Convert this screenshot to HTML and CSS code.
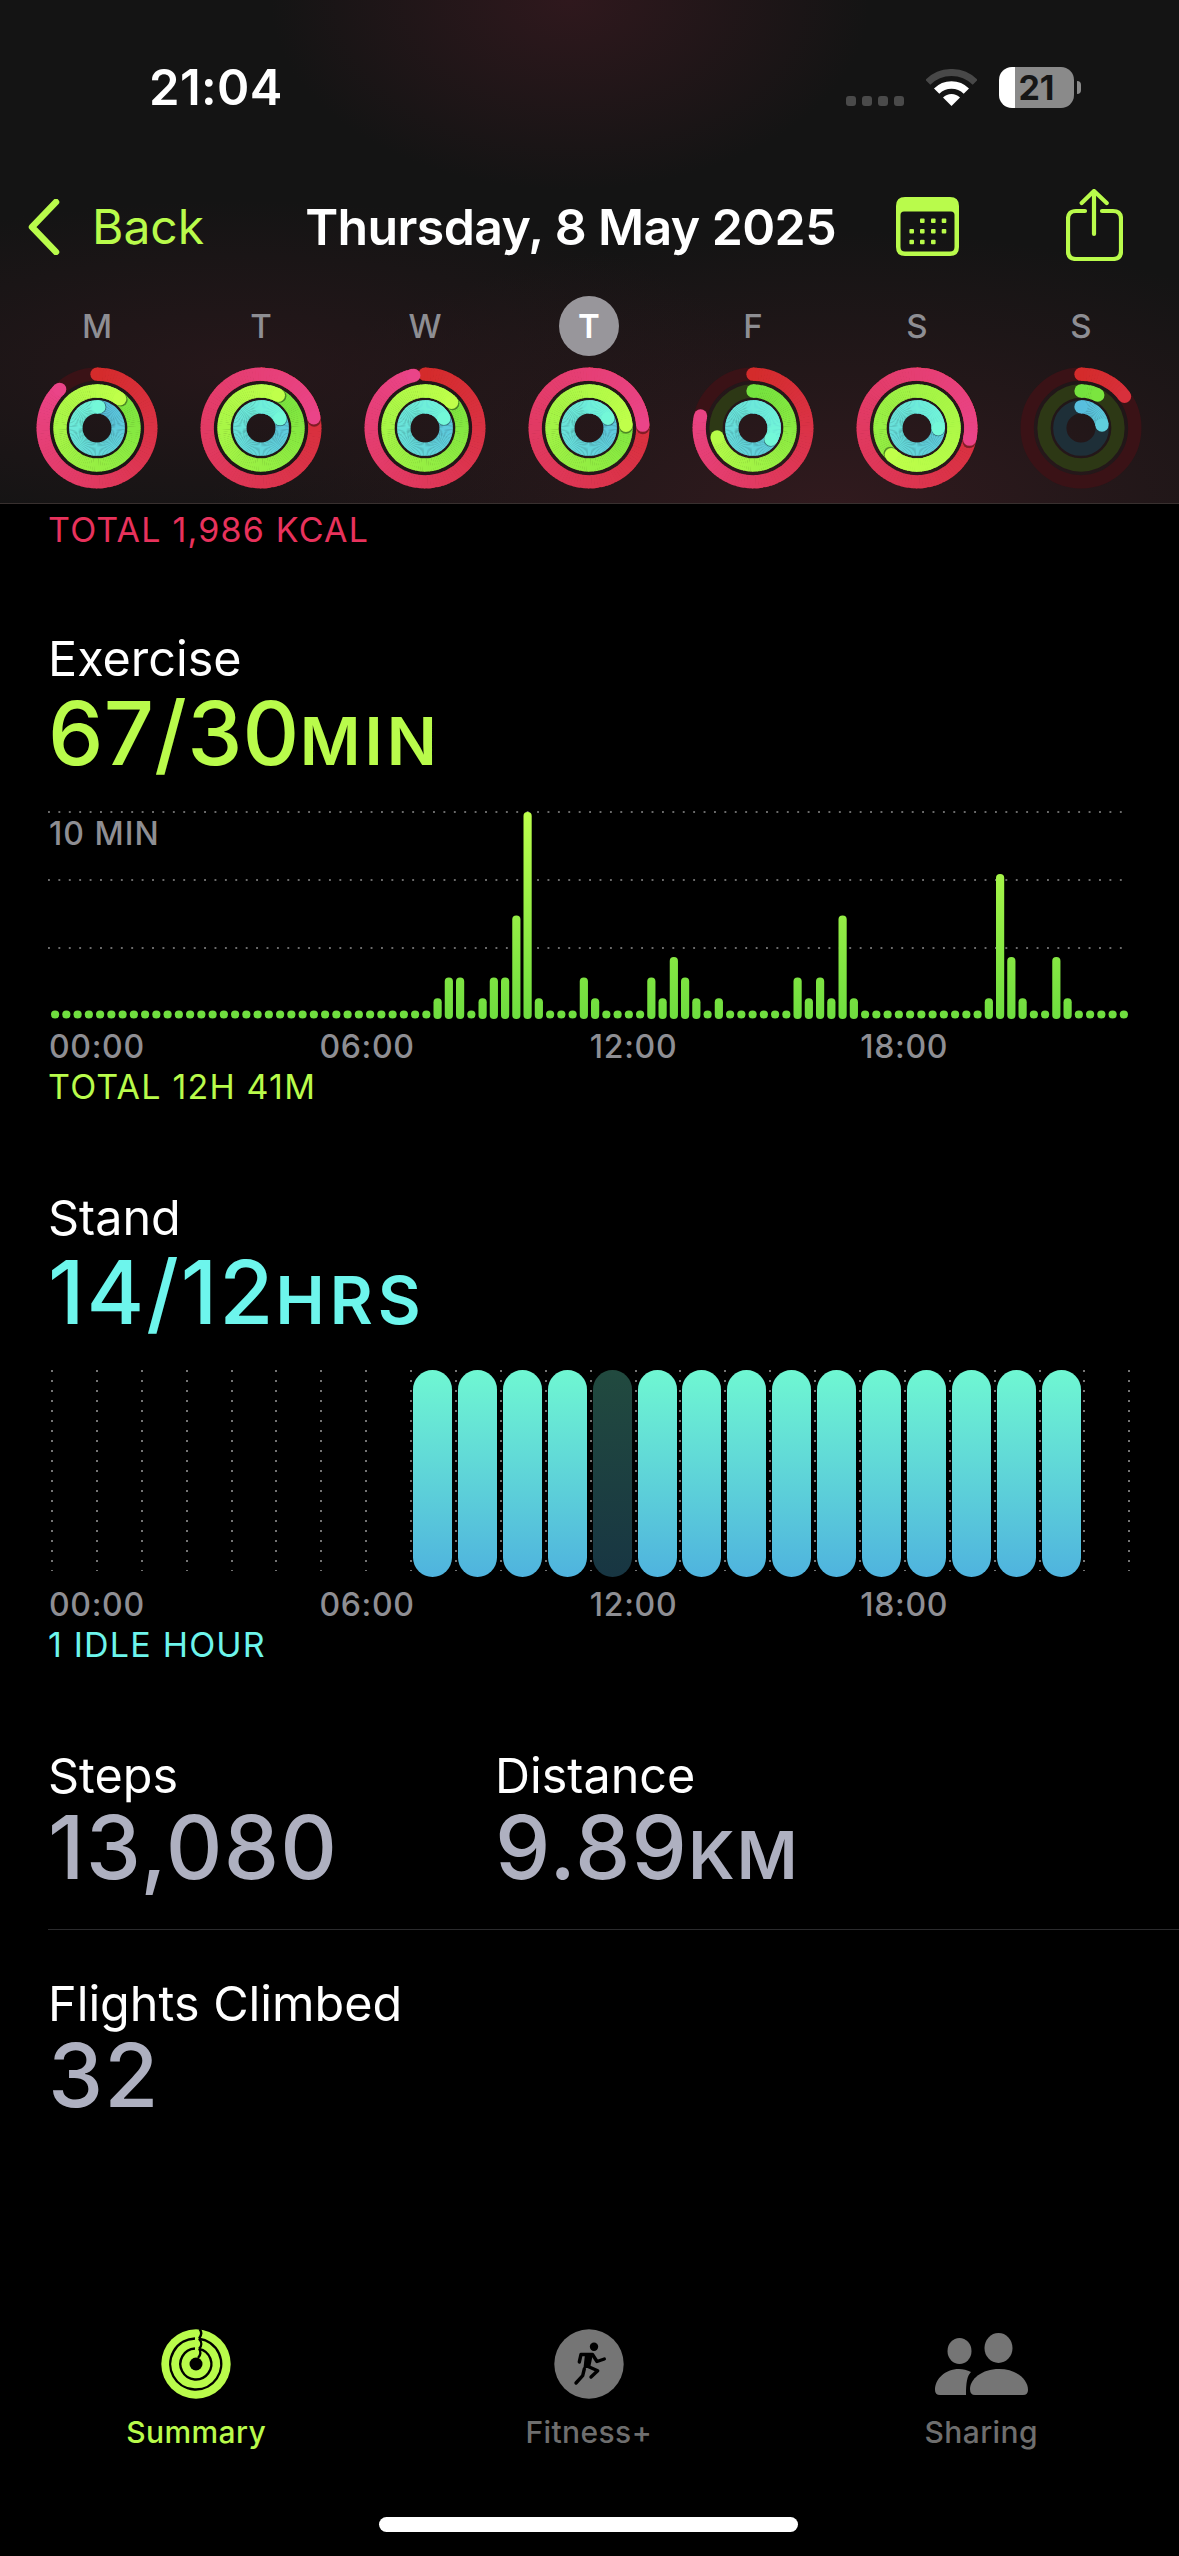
FILE: index.html
```html
<!DOCTYPE html>
<html lang="en">
<head>
    <meta charset="UTF-8">
    <meta name="viewport" content="width=device-width, initial-scale=1.0">
    <title>Activity - Thursday, 8 May 2025</title>
    <link rel="stylesheet" href="styles.css">
</head>
<body>
    <div class="app">
        <header class="top">
            <div class="status">
                <span class="clock">21:04</span>
                <div class="status-right">
                    <div class="signal"><i></i><i></i><i></i><i></i></div>
                    <svg class="wifi" viewBox="0 0 51 37">
                        <path d="M1.8 13.3A33.5 33.5 0 0 1 49.2 13.3" fill="none" stroke="#484848" stroke-width="7"/>
                        <path d="M10.650 22.150A21 21 0 0 1 40.350 22.150" fill="none" stroke="#fff" stroke-width="7.500"/>
                        <path d="M25.500 37L17 28.500A12 12 0 0 1 34 28.500Z" fill="#fff"/>
                    </svg>
                    <div class="battery"><span>21</span></div>
                </div>
            </div>

            <nav class="nav">
                <svg class="chevron" viewBox="0 0 32 56">
                    <path d="M28 3L4 28L28 53" fill="none" stroke="#b9fb4b" stroke-width="6.500" stroke-linecap="round" stroke-linejoin="round"/>
                </svg>
                <span class="back">Back</span>
                <h1 class="title">Thursday, 8 May 2025</h1>
                <svg class="calendar" viewBox="0 0 63 59">
                    <path fill-rule="evenodd" fill="#b9fb4b" d="M9 0H54Q63 0 63 9V50Q63 59 54 59H9Q0 59 0 50V9Q0 0 9 0ZM8 14.500Q4.500 14.500 4.500 18V50Q4.500 54.500 9 54.500H54Q58.500 54.500 58.500 50V18Q58.500 14.500 55 14.500Z"/>
                    <g fill="#b9fb4b">
                        <rect x="24" y="21.500" width="4.600" height="4.600" rx="1"/>
                        <rect x="35" y="21.500" width="4.600" height="4.600" rx="1"/>
                        <rect x="45.700" y="21.500" width="4.600" height="4.600" rx="1"/>
                        <rect x="13.400" y="32" width="4.600" height="4.600" rx="1"/>
                        <rect x="24" y="32" width="4.600" height="4.600" rx="1"/>
                        <rect x="35" y="32" width="4.600" height="4.600" rx="1"/>
                        <rect x="45.700" y="32" width="4.600" height="4.600" rx="1"/>
                        <rect x="13.400" y="42.700" width="4.600" height="4.600" rx="1"/>
                        <rect x="24" y="42.700" width="4.600" height="4.600" rx="1"/>
                        <rect x="35" y="42.700" width="4.600" height="4.600" rx="1"/>
                    </g>
                </svg>
                <svg class="share" viewBox="0 0 57 72">
                    <g fill="none" stroke="#b9fb4b" stroke-width="4.200" stroke-linecap="round" stroke-linejoin="round">
                        <path d="M19 22H10Q2 22 2 30V62Q2 70 10 70H47Q55 70 55 62V30Q55 22 47 22H36"/>
                        <path d="M28 2.500V45"/>
                        <path d="M15.700 14L28 2L40.700 14"/>
                    </g>
                </svg>
            </nav>

            <div class="week">
                <div class="day"><span class="day-label">M</span><svg class="rings" data-rings="316,398,365"></svg></div>
                <div class="day"><span class="day-label">T</span><svg class="rings" data-rings="439,388,424"></svg></div>
                <div class="day"><span class="day-label">W</span><svg class="rings" data-rings="348,406,423"></svg></div>
                <div class="day"><span class="day-label today">T</span><svg class="rings" data-rings="447,446,423"></svg></div>
                <div class="day"><span class="day-label">F</span><svg class="rings" data-rings="283,256,482"></svg></div>
                <div class="day"><span class="day-label">S</span><svg class="rings" data-rings="462,584,452"></svg></div>
                <div class="day"><span class="day-label">S</span><svg class="rings" data-rings="54,27,82"></svg></div>
            </div>
        </header>

        <main class="content">
            <p class="note note-move">TOTAL 1,986 KCAL</p>

            <section class="metric metric-first">
                <h2 class="metric-name">Exercise</h2>
                <p class="metric-value value-exercise">67/30<small>MIN</small></p>
            </section>
            <div class="chart-exercise">
                <span class="chart-scale">10 MIN</span>
                <svg class="bars" id="exerciseBars" viewBox="0 0 1082 208">
                    <defs>
                        <linearGradient id="barFill" gradientUnits="userSpaceOnUse" x1="0" y1="208" x2="0" y2="0">
                            <stop offset="0" stop-color="#6edd3f"/>
                            <stop offset="1" stop-color="#bdff4c"/>
                        </linearGradient>
                    </defs>
                </svg>
            </div>
            <div class="axis"><span>00:00</span><span>06:00</span><span>12:00</span><span>18:00</span></div>
            <p class="note note-exercise">TOTAL 12H 41M</p>

            <section class="metric">
                <h2 class="metric-name">Stand</h2>
                <p class="metric-value value-stand">14/12<small>HRS</small></p>
            </section>
            <div class="chart-stand" id="standBars"></div>
            <div class="axis"><span>00:00</span><span>06:00</span><span>12:00</span><span>18:00</span></div>
            <p class="note note-stand">1 IDLE HOUR</p>

            <div class="metric-pair">
                <section class="metric">
                    <h2 class="metric-name">Steps</h2>
                    <p class="metric-value value-plain">13,080</p>
                </section>
                <section class="metric">
                    <h2 class="metric-name">Distance</h2>
                    <p class="metric-value value-plain">9.89<small>KM</small></p>
                </section>
            </div>
            <hr class="divider">
            <section class="metric metric-flights">
                <h2 class="metric-name">Flights Climbed</h2>
                <p class="metric-value value-plain">32</p>
            </section>
        </main>

        <footer class="tabs">
            <div class="tab tab-active">
                <svg class="tab-icon" viewBox="0 0 70 70">
                    <circle cx="35" cy="35" r="34.700" fill="#b9fb4b"/>
                    <g fill="none" stroke="#000" stroke-width="2.400">
                        <path d="M38 9.700A25.500 25.500 0 1 1 34 9.500"/>
                        <path d="M38 9.700C41 6 41 3 38.500 0"/>
                        <path d="M38 19.800A15.500 15.500 0 1 1 34 19.500"/>
                        <path d="M38 19.800C41 17 41 13 38 9.700"/>
                        <path d="M38 19.800C40 22 40 26 37 29"/>
                    </g>
                    <circle cx="35" cy="35" r="6.500" fill="#000"/>
                </svg>
                <span class="tab-label">Summary</span>
            </div>
            <div class="tab">
                <svg class="tab-icon" viewBox="0 0 70 70">
                    <circle cx="35" cy="35" r="34.700" fill="#757575"/>
                    <circle cx="40" cy="17.700" r="4.200" fill="#000"/>
                    <g fill="none" stroke="#000" stroke-width="3.400" stroke-linecap="round" stroke-linejoin="round">
                        <path d="M25.300 33L27 25.500H38.500L43 32.500L50.300 30"/>
                        <path d="M30.300 40L28.700 46.700L22 54"/>
                        <path d="M33 37L43.700 41.700L37 48"/>
                    </g>
                    <path d="M31 25H39L36 39H29.500Z" fill="#000"/>
                </svg>
                <span class="tab-label">Fitness+</span>
            </div>
            <div class="tab">
                <svg class="tab-icon-wide" viewBox="0 0 93 62">
                    <g fill="#757575">
                        <ellipse cx="24.500" cy="18" rx="12" ry="13"/>
                        <ellipse cx="63.500" cy="15" rx="14" ry="15"/>
                        <path d="M0 57C0 46 10 36 24 36C28 36 32 37 36 39C32 43 31 50 31 62H5Q0 62 0 57Z"/>
                        <path d="M35 56C35 46 47 36 64 36C81 36 93 46 93 57Q93 62 88 62H40Q35 62 35 56Z"/>
                    </g>
                </svg>
                <span class="tab-label">Sharing</span>
            </div>
            <div class="home-bar"></div>
        </footer>
    </div>

    <script src="script.js"></script>
</body>
</html>
```

FILE: styles.css
```css
body {
    font-family: Inter, "Noto Sans", sans-serif;
    margin: 0;
    background-color: #000;
    color: #fff;
}
h1, h2, p {
    margin: 0;
    font-weight: 400;
}
.app {
    display: flex;
    flex-direction: column;
    width: 1179px;
    height: 2556px;
    overflow: hidden;
}

/* header */
.top {
    height: 503px;
    box-sizing: content-box;
    border-bottom: 1px solid #38302f;
    background-color: #141414;
    background-image:
        radial-gradient(ellipse 300px 190px at 570px 0, #2f181d, rgba(47,24,29,0)),
        radial-gradient(ellipse 520px 170px at 240px 370px, rgba(44,24,28,.75), rgba(44,24,28,0)),
        radial-gradient(ellipse 620px 280px at 830px 510px, #311a1e, rgba(49,26,30,0));
}
.status {
    display: flex;
    align-items: flex-end;
    height: 41px;
    padding: 67px 105px 0 149px;
}
.clock {
    font-size: 49px;
    font-weight: 600;
    line-height: 41px;
    letter-spacing: .4px;
}
.status-right {
    display: flex;
    align-items: flex-end;
    margin-left: auto;
}
.signal {
    display: flex;
    gap: 6px;
    margin-bottom: 2px;
}
.signal i {
    width: 10px;
    height: 10px;
    border-radius: 3px;
    background-color: #4a4a4a;
}
.wifi {
    width: 51px;
    height: 37px;
    margin: 0 22px 2px;
}
.battery {
    position: relative;
    width: 75px;
    height: 41px;
    border-radius: 13px;
    background: linear-gradient(to right, #fff 16px, #8a8a8a 16px);
    text-align: center;
}
.battery span {
    font-size: 34px;
    font-weight: 700;
    line-height: 41px;
    color: #161616;
}
.battery::after {
    content: "";
    position: absolute;
    left: 78px;
    top: 14px;
    width: 4px;
    height: 13px;
    border-radius: 0 6px 6px 0;
    background-color: #8a8a8a;
}
.nav {
    display: flex;
    align-items: center;
    height: 72px;
    margin-top: 81px;
    padding: 0 56px 0 28px;
}
.chevron {
    width: 32px;
    height: 56px;
    margin-top: 4px;
}
.back {
    margin: 3px 0 0 32px;
    font-size: 48px;
    color: #b9fb4b;
}
.title {
    margin: 3px 0 0 101px;
    font-size: 50px;
    font-weight: 600;
    letter-spacing: -0.6px;
    white-space: nowrap;
}
.calendar {
    width: 63px;
    height: 59px;
    margin-left: auto;
    margin-top: 3px;
}
.share {
    width: 57px;
    height: 72px;
    margin-left: 107px;
}
.week {
    display: grid;
    grid-template-columns: repeat(7, 164px);
    padding: 35px 0 0 15px;
}
.day {
    display: flex;
    flex-direction: column;
    align-items: center;
}
.day-label {
    display: flex;
    align-items: center;
    justify-content: center;
    width: 60px;
    height: 60px;
    border-radius: 50%;
    font-size: 33px;
    font-weight: 500;
    color: #8e8e93;
}
.day-label.today {
    background-color: #98969b;
    color: #fff;
    font-weight: 600;
}
.rings {
    width: 124px;
    height: 124px;
    margin-top: 10px;
}

/* main column */
.content {
    padding: 6px 0 0 48px;
}
.note {
    font-size: 34px;
    line-height: 40px;
    letter-spacing: 1.2px;
}
.note-move {
    color: #e8325c;
}
.note-exercise {
    color: #b9fb4b;
}
.note-stand {
    color: #6df5ec;
}
.metric {
    margin-top: 83px;
}
.metric-first {
    margin-top: 81px;
}
.metric-name {
    font-size: 48.500px;
    line-height: 56px;
}
.metric-value {
    height: 84px;
    margin-top: 4px;
    font-size: 88px;
    font-weight: 500;
    line-height: 84px;
    white-space: nowrap;
}
.metric-value small {
    font-size: 66px;
    font-weight: 600;
}
.value-exercise {
    color: #b9fb4b;
    letter-spacing: .3px;
}
.value-exercise small {
    letter-spacing: 4px;
}
.value-stand {
    color: #6df5ec;
    letter-spacing: 2px;
}
.value-stand small {
    letter-spacing: 5px;
}
.value-plain {
    height: 86px;
    margin-top: 1px;
    color: #aeb0c0;
    letter-spacing: 1.2px;
}
.value-plain small {
    letter-spacing: 2px;
}

/* exercise chart */
.chart-exercise {
    position: relative;
    width: 1082px;
    height: 208px;
    margin-top: 36px;
    background-image:
        linear-gradient(to right, #6a6a6a 2px, transparent 2px),
        linear-gradient(to right, #6a6a6a 2px, transparent 2px),
        linear-gradient(to right, #6a6a6a 2px, transparent 2px);
    background-size: 10.420px 2px;
    background-position: 0 0, 0 68px, 0 136px;
    background-repeat: repeat-x;
}
.chart-scale {
    position: absolute;
    left: 1px;
    top: 3px;
    font-size: 32px;
    font-weight: 500;
    line-height: 40px;
    letter-spacing: 1px;
    color: #8e8e93;
}
.bars {
    display: block;
    width: 1082px;
    height: 208px;
}

/* stand chart */
.chart-stand {
    display: flex;
    width: 1082px;
    height: 207px;
    margin: 36px 0 0 2px;
}
.stand-col {
    flex: 0 0 44.900px;
    position: relative;
    height: 201px;
    background-image: linear-gradient(to bottom, #747474 2px, transparent 2px);
    background-size: 2px 10px;
    background-repeat: repeat-y;
    background-position: 1px 0;
}
.stand-bar {
    position: absolute;
    left: 4px;
    top: 0;
    width: 39px;
    height: 207px;
    border-radius: 19.500px;
    background-image: linear-gradient(to bottom, #6ff7d2, #4fb3de);
}
.stand-bar.idle {
    opacity: .3;
}

.axis {
    display: grid;
    grid-template-columns: repeat(4, 270.400px);
    margin: 8px 0 0 1px;
    font-size: 32px;
    font-weight: 500;
    line-height: 40px;
    letter-spacing: .7px;
    color: #8e8e93;
}
.metric-pair {
    display: grid;
    grid-template-columns: 447px auto;
}
.divider {
    height: 1px;
    margin: 38px 0 0;
    border: 0;
    background-color: #2b2b2d;
}
.metric-flights {
    margin-top: 46px;
}

/* tab bar */
.tabs {
    display: grid;
    grid-template-columns: repeat(3, 392.500px);
    margin-top: auto;
    padding-bottom: 24px;
}
.tab {
    display: flex;
    flex-direction: column;
    align-items: center;
    color: #6e6e6e;
}
.tab-active {
    color: #b9fb4b;
}
.tab-icon {
    width: 70px;
    height: 70px;
}
.tab-icon-wide {
    width: 93px;
    height: 62px;
    margin: 4px 0;
}
.tab-label {
    margin-top: 15px;
    font-size: 30px;
    font-weight: 500;
    line-height: 36px;
    letter-spacing: .4px;
}
.home-bar {
    grid-column: 1 / 4;
    justify-self: center;
    width: 419px;
    height: 15px;
    margin-top: 67px;
    border-radius: 8px;
    background-color: #fff;
}
```

FILE: script.js
```js
document.addEventListener('DOMContentLoaded', function() {
    // colours of each ring: start of the arc, end of the arc, empty track
    const ringStyles = [
        { r: 53.8, from: [212, 43, 43], to: [234, 68, 136], track: '#3a1216' },
        { r: 37, from: [116, 226, 62], to: [192, 255, 74], track: '#2d3815' },
        { r: 21.2, from: [88, 190, 222], to: [115, 248, 216], track: '#1e2f38' }
    ];
    const ringWidth = 13.3;
    const svgNs = 'http://www.w3.org/2000/svg';

    function point(r, deg) {
        const a = (deg - 90) * Math.PI / 180;
        return (r * Math.cos(a)).toFixed(2) + ' ' + (r * Math.sin(a)).toFixed(2);
    }

    function add(svg, name, attrs) {
        const el = document.createElementNS(svgNs, name);
        Object.keys(attrs).forEach(key => el.setAttribute(key, attrs[key]));
        svg.appendChild(el);
    }

    function mix(style, t) {
        const c = style.from.map((v, i) => Math.round(v + (style.to[i] - v) * t));
        return 'rgb(' + c.join(',') + ')';
    }

    function cap(svg, r, deg, fill, opacity) {
        const xy = point(r, deg).split(' ');
        add(svg, 'circle', { cx: xy[0], cy: xy[1], r: ringWidth / 2, fill: fill, 'fill-opacity': opacity });
    }

    function drawRing(svg, style, total) {
        const span = Math.max(total, 300);
        add(svg, 'circle', { r: style.r, fill: 'none', stroke: style.track, 'stroke-width': ringWidth });
        cap(svg, style.r, 0, mix(style, 0), 1);

        let shadowDone = total <= 360;
        for (let a = 0; a < total; a += 3) {
            if (!shadowDone && a >= total - 9) {
                cap(svg, style.r, total + 2.5, '#000', 0.4);
                shadowDone = true;
            }
            const end = Math.min(a + 3.6, total);
            add(svg, 'path', {
                d: 'M' + point(style.r, a) + 'A' + style.r + ' ' + style.r + ' 0 0 1 ' + point(style.r, end),
                fill: 'none',
                stroke: mix(style, a / span),
                'stroke-width': ringWidth
            });
        }
        cap(svg, style.r, total, mix(style, total / span), 1);
    }

    document.querySelectorAll('.rings').forEach(svg => {
        svg.setAttribute('viewBox', '-62 -62 124 124');
        svg.dataset.rings.split(',').forEach((value, i) => {
            drawRing(svg, ringStyles[i], Number(value));
        });
    });

    // exercise minutes for each quarter of an hour, only the non-zero ones
    const minutes = {
        34: 1, 35: 2, 36: 2, 38: 1, 39: 2, 40: 2, 41: 5, 42: 10, 43: 1, 47: 2, 48: 1,
        53: 2, 54: 1, 55: 3, 56: 2, 57: 1, 59: 1, 66: 2, 67: 1, 68: 2, 69: 1, 70: 5, 71: 1,
        83: 1, 84: 7, 85: 3, 86: 1, 89: 3, 90: 1
    };
    const exerciseBars = document.getElementById('exerciseBars');
    for (let i = 0; i < 96; i++) {
        const height = minutes[i] ? minutes[i] * 20.7 : 8;
        add(exerciseBars, 'rect', {
            x: (3 + i * 11.25).toFixed(2),
            y: (minutes[i] ? 208 : 207.5) - height,
            width: 8.2,
            height: height,
            rx: 4,
            fill: 'url(#barFill)'
        });
    }

    // one dotted column per hour, the bars start at 08:00
    const standBars = document.getElementById('standBars');
    for (let hour = 0; hour < 25; hour++) {
        const col = document.createElement('div');
        col.className = 'stand-col';
        if (hour >= 8 && hour <= 22) {
            const bar = document.createElement('div');
            bar.className = hour === 12 ? 'stand-bar idle' : 'stand-bar';
            col.appendChild(bar);
        }
        standBars.appendChild(col);
    }
});
```
